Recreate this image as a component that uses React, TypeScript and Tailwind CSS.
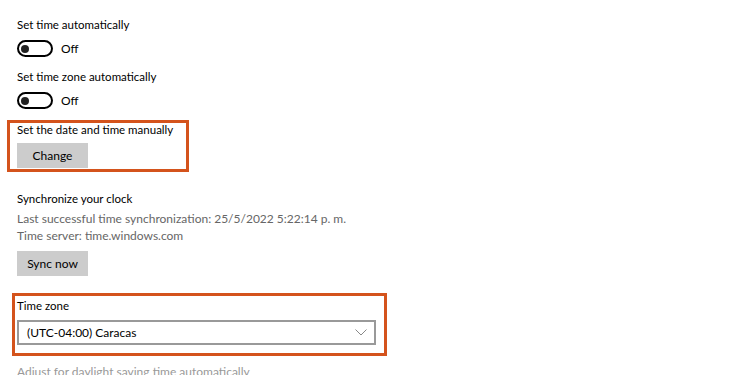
import React from 'react'

const ORANGE = 'border-[#d4531c]'

function Toggle() {
  return (
    <div className="flex h-[17px] items-center">
      <div className="flex h-[17px] w-[36px] items-center rounded-full border-2 border-black pl-[2px]">
        <div className="h-[8px] w-[8px] rounded-full bg-[#222]" />
      </div>
      <span className="ml-[8px] text-[12px] leading-4">Off</span>
    </div>
  )
}

function GrayButton({ label }: { label: string }) {
  return (
    <div className="flex h-[25px] w-[71px] items-center justify-center bg-[#cccccc] text-[12px]">
      {label}
    </div>
  )
}

export default function App() {
  return (
    <div
      className="h-[375px] w-[750px] overflow-hidden whitespace-nowrap bg-white pl-[17px] pt-[17px] text-black"
      style={{ fontFamily: 'Lato, "Noto Sans", sans-serif' }}
    >
      <div className="text-[11.5px] leading-4">Set time automatically</div>
      <div className="mt-[7px]">
        <Toggle />
      </div>

      <div className="mt-[12px] text-[11.5px] leading-4">Set time zone automatically</div>
      <div className="mt-[7px]">
        <Toggle />
      </div>

      {/* highlighted: manual date */}
      <div className={`-ml-[10px] mt-[11px] w-[182px] border-[3px] ${ORANGE} pb-[1px] pl-[7px]`}>
        <div className="text-[11.5px] leading-[14px]">Set the date and time manually</div>
        <div className="mt-[6px]">
          <GrayButton label="Change" />
        </div>
      </div>

      <div className="mt-[19px] text-[11.5px] leading-4">Synchronize your clock</div>
      <div className="mt-[3px] text-[12px] leading-[17px] text-[#666]">
        <div>Last successful time synchronization: 25/5/2022 5:22:14 p. m.</div>
        <div>Time server: time.windows.com</div>
      </div>
      <div className="mt-[7px]">
        <GrayButton label="Sync now" />
      </div>

      {/* highlighted: time zone */}
      <div className={`-ml-[5px] mt-[17px] w-[375px] border-[3px] ${ORANGE} px-[2px] pb-[8px] pt-[2px]`}>
        <div className="text-[11.5px] leading-4">Time zone</div>
        <div className="mt-[6px] flex h-[25px] w-[359px] items-center justify-between border-2 border-[#999] pl-[8px] pr-[7px] text-[12px]">
          <span>(UTC-04:00) Caracas</span>
          <svg width="12" height="7" viewBox="0 0 12 7" fill="none">
            <path d="M0.5 0.5 L6 6 L11.5 0.5" stroke="#888" strokeWidth="1" />
          </svg>
        </div>
      </div>

      <div className="mt-[8px] text-[12px] leading-4 text-[#999]">
        Adjust for daylight saving time automatically
      </div>
    </div>
  )
}
